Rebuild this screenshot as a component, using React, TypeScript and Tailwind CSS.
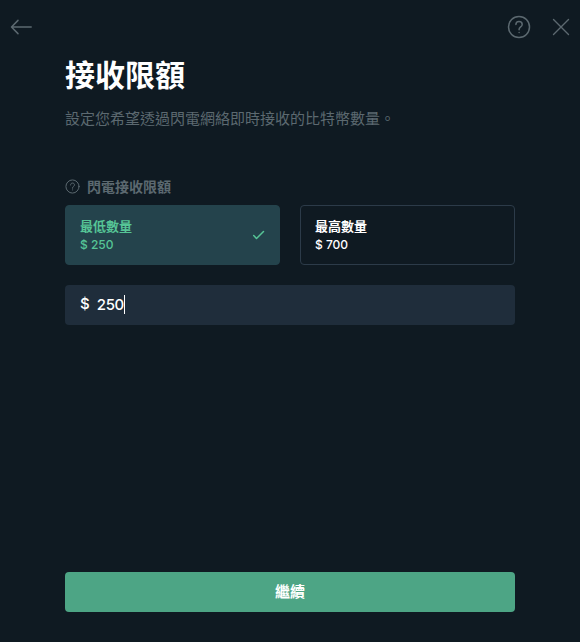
import { useState } from "react";

interface LimitOption {
  id: string;
  label: string;
  amount: number;
}

const options: LimitOption[] = [
  { id: "min", label: "最低數量", amount: 250 },
  { id: "max", label: "最高數量", amount: 700 },
];

function ArrowLeftIcon() {
  return (
    <svg width="22" height="16" viewBox="0 0 22 16" fill="none" stroke="currentColor" strokeWidth="1.5" strokeLinecap="round" strokeLinejoin="round">
      <path d="M21.2 8H1.8M8 1.4L1.5 8L8 14.6" />
    </svg>
  );
}

function QuestionIcon({ size, strokeWidth }: { size: number; strokeWidth: number }) {
  return (
    <svg width={size} height={size} viewBox="0 0 24 24" fill="none" stroke="currentColor" strokeWidth={strokeWidth} strokeLinecap="round" strokeLinejoin="round">
      <circle cx="12" cy="12" r="10.5" />
      <path d="M8.9 9.6C8.9 7.7 10.2 6.5 12 6.5C13.9 6.5 15.2 7.7 15.2 9.4C15.2 11.8 12.1 11.9 12.1 14.3V14.8" />
      <path d="M12.1 17.4V17.6" />
    </svg>
  );
}

function CloseIcon() {
  return (
    <svg width="18" height="18" viewBox="0 0 18 18" fill="none" stroke="currentColor" strokeWidth="1.4" strokeLinecap="round">
      <path d="M1.5 1.5L16.5 16.5M16.5 1.5L1.5 16.5" />
    </svg>
  );
}

function CheckIcon() {
  return (
    <svg width="14" height="10" viewBox="0 0 14 10" fill="none" stroke="currentColor" strokeWidth="1.5" strokeLinecap="round" strokeLinejoin="round">
      <path d="M2.7 5.6L5.5 8.5L12.5 1.5" />
    </svg>
  );
}

export default function App() {
  const [selected, setSelected] = useState("min");
  const [amount, setAmount] = useState(250);

  const handleSelect = (option: LimitOption) => {
    setSelected(option.id);
    setAmount(option.amount);
  };

  return (
    <div className="flex h-[642px] w-[580px] flex-col bg-[#0f1a22] font-['Inter','Noto_Sans_CJK_TC',sans-serif] text-white">
      {/* Top bar */}
      <header className="flex h-[54px] shrink-0 items-center justify-between pr-2.5 pl-2.5 text-[#5c6970]">
        <button type="button" aria-label="返回">
          <ArrowLeftIcon />
        </button>
        <div className="flex items-center gap-[21px]">
          <button type="button" aria-label="說明">
            <QuestionIcon size={24} strokeWidth={1.5} />
          </button>
          <button type="button" aria-label="關閉">
            <CloseIcon />
          </button>
        </div>
      </header>

      <main className="flex flex-1 flex-col px-[65px] pb-[30px]">
        <h1 className="text-[30px] leading-[42px] font-bold">接收限額</h1>
        <p className="mt-3 text-[15px] leading-[22px] text-[#5c6970]">
          設定您希望透過閃電網絡即時接收的比特幣數量。
        </p>

        {/* Limit options */}
        <div className="mt-[46px] flex h-5 items-center gap-[7px] text-[#5c6970]">
          <QuestionIcon size={15} strokeWidth={1.6} />
          <span className="pt-0.5 text-sm leading-5 font-bold">閃電接收限額</span>
        </div>
        <div className="mt-[9px] grid grid-cols-2 gap-5">
          {options.map((option) => (
            <button
              key={option.id}
              type="button"
              onClick={() => handleSelect(option)}
              className={`flex h-[60px] items-center justify-between rounded-[4px] border pr-3.5 pl-3.5 text-left ${
                selected === option.id
                  ? "border-[#24434c] bg-[#24434c] text-[#56c596]"
                  : "border-[#2c3b49] text-white"
              }`}
            >
              <span className="flex flex-col">
                <span className="text-[13px] leading-[18px] font-bold">{option.label}</span>
                <span className="pt-px text-xs leading-[17px] font-medium">$ {option.amount}</span>
              </span>
              {selected === option.id && <CheckIcon />}
            </button>
          ))}
        </div>

        {/* Amount field */}
        <div className="mt-5 flex h-10 items-center rounded-[4px] bg-[#1f2d3b] px-[15px] pb-px text-[15px] font-medium">
          <span className="mr-[7px]">$</span>
          <span className="pt-0.5 tracking-[-0.3px]">{amount}</span>
          <span className="h-[19px] w-px bg-white" />
        </div>

        <button type="button" className="mt-auto h-10 rounded-[4px] bg-[#4da585] text-[15px] font-bold text-white">
          繼續
        </button>
      </main>
    </div>
  );
}
